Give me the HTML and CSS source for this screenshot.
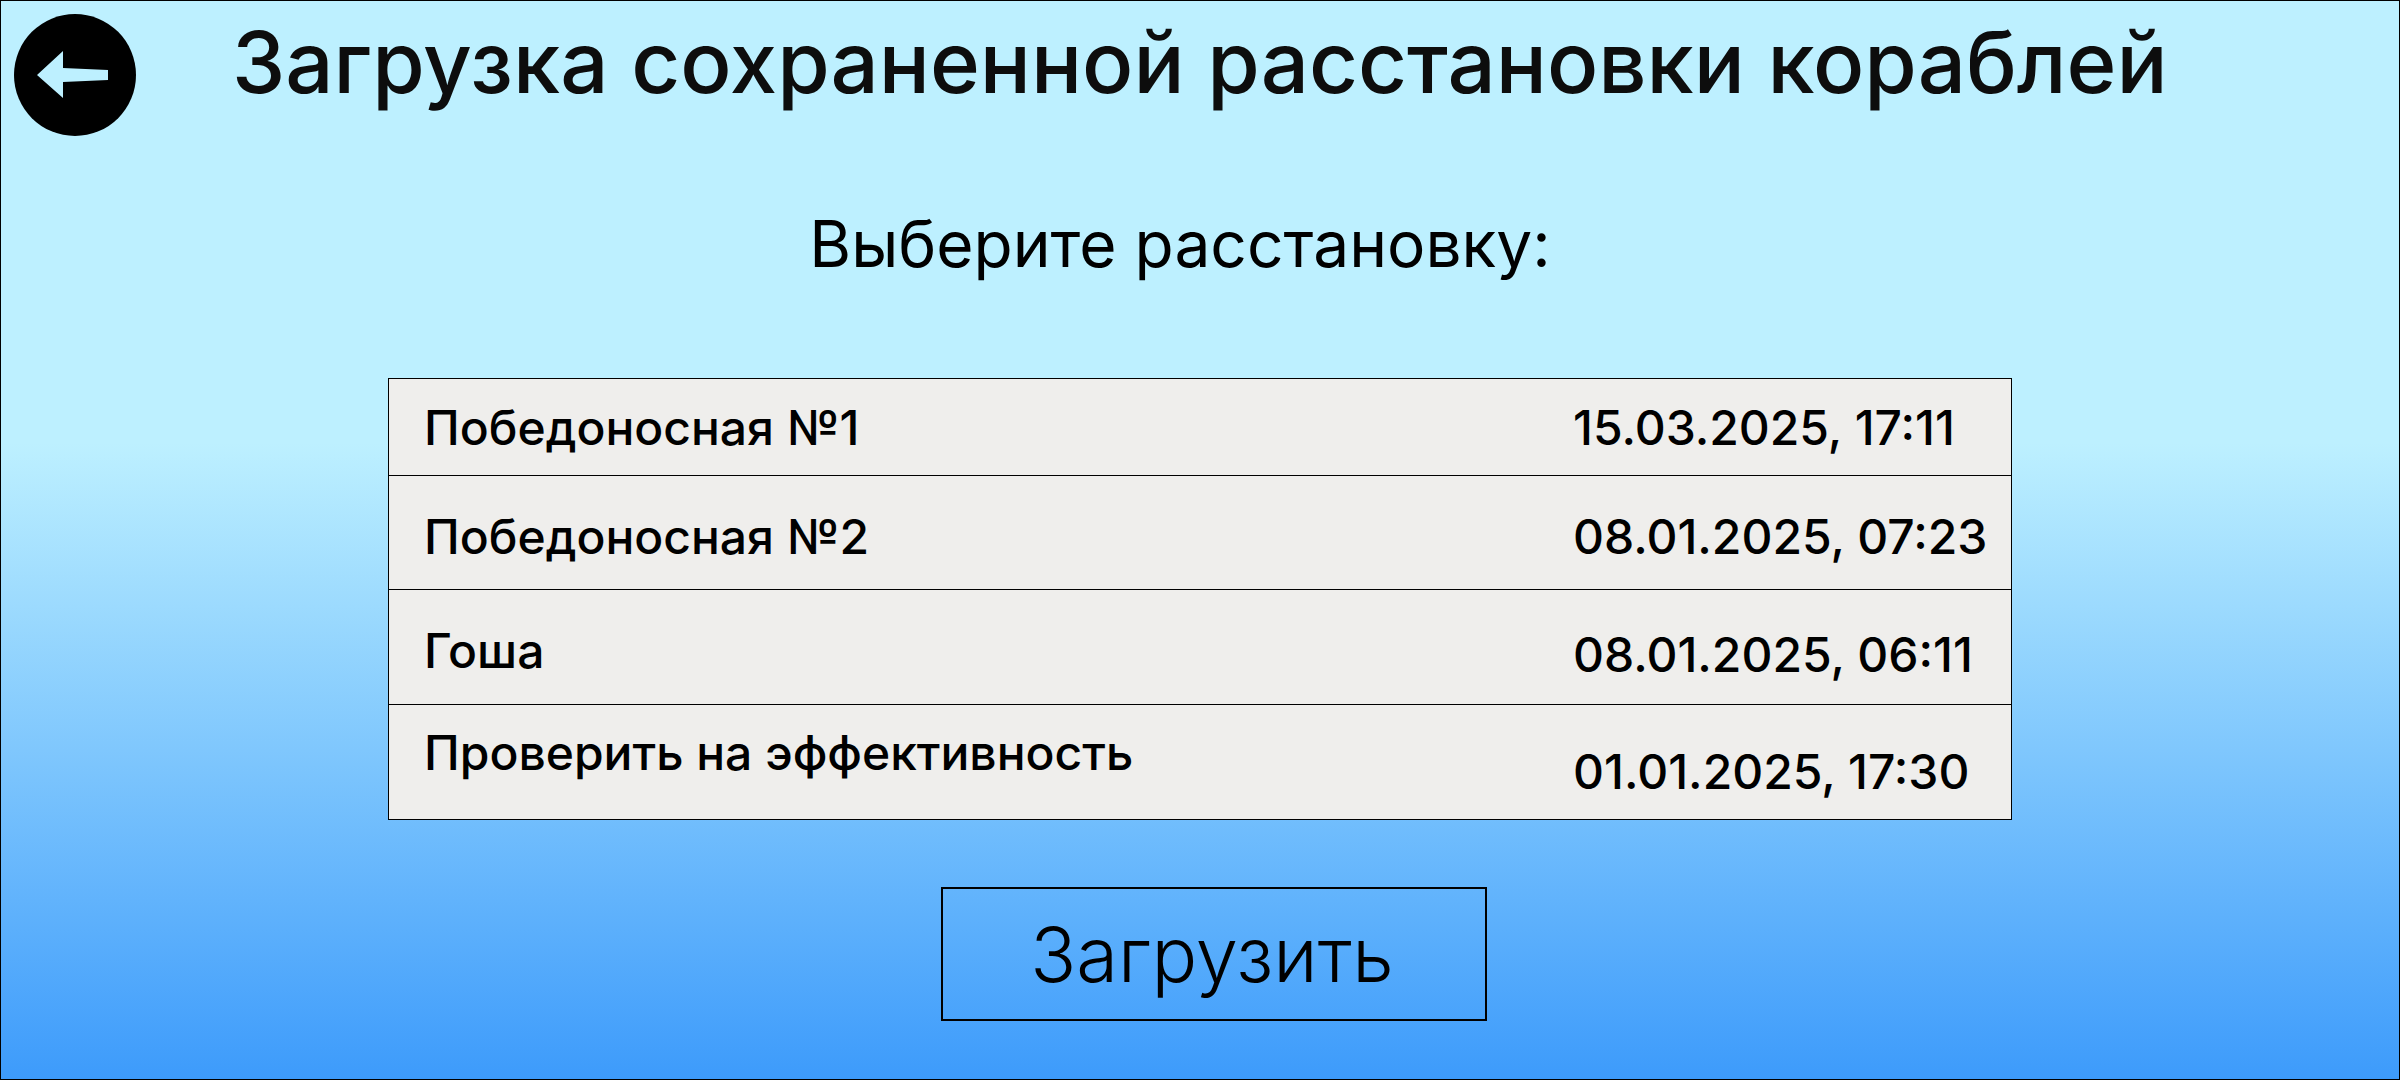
FILE: index.html
```html
<!DOCTYPE html>
<html lang="ru">
<head>
<meta charset="utf-8">
<title>Загрузка расстановки</title>
<link rel="stylesheet" href="styles.css">
</head>
<body>
<main class="screen">
  <header class="header">
    <button class="back" type="button" aria-label="Назад">
      <svg class="back-icon" viewBox="0 0 124 124" aria-hidden="true">
        <circle cx="62" cy="62" r="61" fill="#000"/>
        <path d="M24 62 L50 38 V55 L95 57 V67 L50 69 V85 Z" fill="#bdf0ff"/>
      </svg>
    </button>
    <h1 class="title">Загрузка сохраненной расстановки кораблей</h1>
  </header>
  <h2 class="subtitle">Выберите расстановку:</h2>
  <table class="layouts">
    <tbody>
      <tr class="row row-first"><td class="name">Победоносная №1</td><td class="date">15.03.2025, 17:11</td></tr>
      <tr class="row row-second"><td class="name low">Победоносная №2</td><td class="date low">08.01.2025, 07:23</td></tr>
      <tr class="row"><td class="name low">Гоша</td><td class="date lower">08.01.2025, 06:11</td></tr>
      <tr class="row"><td class="name high">Проверить на эффективность</td><td class="date lowest">01.01.2025, 17:30</td></tr>
    </tbody>
  </table>
  <button class="load" type="button">Загрузить</button>
</main>
</body>
</html>
```
FILE: styles.css
```css
* { box-sizing: border-box; }
body { margin: 0; font-family: Inter, sans-serif; color: #000; }
.screen {
  min-height: 100vh;
  border: 1px solid #000;
  display: flex;
  flex-direction: column;
  align-items: center;
  background: linear-gradient(180deg, #bdf0ff 0%, #bdf0ff 41%, #3d9bfb 100%);
}
.header { width: 100%; height: 136px; display: flex; padding: 12px; }
.back { width: 124px; height: 124px; padding: 0; border: 0; background: none; flex: none; }
.back-icon { display: block; width: 100%; }
.title { margin: 0 0 0 95px; font-size: 85px; line-height: 100px; font-weight: 500; white-space: nowrap; color: #0d0d0d; }
.subtitle { margin: 69px 0 0; padding-right: 40px; font-size: 64px; line-height: 76px; font-weight: 400; }
.layouts {
  width: 1624px;
  max-width: 100%;
  margin-top: 96px;
  border: 1px solid #000;
  border-spacing: 0;
  table-layout: fixed;
  background: #efeeec;
  font-size: 48px;
  line-height: 58px;
  font-weight: 500;
}
.row { height: 115px; }
.row-first { height: 97px; }
.row-second, .row:last-child { height: 114px; }
.row td { padding: 2px 0 0; border-bottom: 1px solid #000; }
.row:last-child td { border-bottom: 0; }
.row .name { padding-left: 35px; }
.date { width: 438px; }
.row .low { padding-top: 8px; }
.row .lower { padding-top: 16px; }
.row .lowest { padding-top: 20px; }
.row .high { padding: 0 0 18px 35px; }
.load {
  width: 546px;
  height: 134px;
  margin: 67px 0 0 28px;
  padding: 0 4px 0 0;
  border: 2px solid #000;
  background: none;
  color: #000;
  font: 300 76px/92px Inter, sans-serif;
}
```
